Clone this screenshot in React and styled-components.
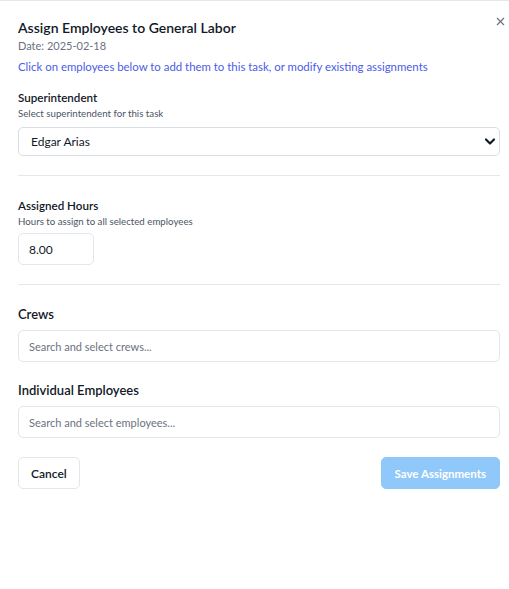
import React from 'react';
import styled, { createGlobalStyle } from 'styled-components';

const GlobalStyle = createGlobalStyle`
  body {
    margin: 0;
    background: #fff;
    font-family: Lato, "Noto Sans", sans-serif;
    color: #111827;
  }
`;

const Panel = styled.div`
  position: relative;
  box-sizing: border-box;
  min-height: 589px;
  border-top: 1px solid #e3e6ec;
  padding: 17px 9px 0 18px;
  background: #fff;
`;

const Close = styled.button`
  position: absolute;
  top: 12px;
  right: 1px;
  width: 16px;
  height: 16px;
  padding: 0;
  border: 0;
  background: none;
  color: #6b7280;
  display: flex;
  align-items: center;
  justify-content: center;
`;

const Title = styled.h2`
  margin: 0;
  font-size: 14px;
  line-height: 20px;
  font-weight: 600;
  color: #111827;
`;

const DateLine = styled.div`
  font-size: 11px;
  line-height: 16px;
  color: #6b7280;
`;

const Hint = styled.div`
  margin-top: 5px;
  font-size: 11.4px;
  line-height: 16px;
  color: #4a5ce8;
`;

const Section = styled.section`
  padding: ${p => p.$top || 20}px 0 19px;
  border-bottom: ${p => (p.$divider ? '1px solid #e3e6ec' : '0')};
`;

const Label = styled.div`
  font-size: ${p => (p.$big ? 13 : 11.6)}px;
  line-height: ${p => (p.$big ? 18 : 16)}px;
  font-weight: 600;
  color: #111827;
`;

const Sub = styled.div`
  font-size: 9.7px;
  line-height: 14px;
  color: #4b5563;
`;

const SelectWrap = styled.div`
  position: relative;
  margin-top: 7px;
`;

const Select = styled.select`
  appearance: none;
  box-sizing: border-box;
  width: 100%;
  height: 29px;
  padding: 0 30px 0 12px;
  border: 1px solid #d9dde4;
  border-radius: 5px;
  background: #fff;
  font: inherit;
  font-size: 12px;
  color: #111827;
`;

const Chevron = styled.svg`
  position: absolute;
  right: 4px;
  top: 10px;
  pointer-events: none;
`;

const Input = styled.input`
  box-sizing: border-box;
  display: block;
  width: ${p => p.$width || '100%'};
  height: 32px;
  margin-top: ${p => p.$gap || 7}px;
  padding: 0 10px;
  border: 1px solid #e3e6ec;
  border-radius: 5px;
  font: inherit;
  font-size: ${p => (p.$value ? 12 : 11)}px;
  color: #111827;
  &::placeholder {
    color: #6b7280;
  }
`;

const Actions = styled.div`
  display: flex;
  justify-content: space-between;
  margin-top: 19px;
`;

const Button = styled.button`
  height: 32px;
  padding: 0 ${p => (p.$primary ? 13 : 12)}px;
  border-radius: 5px;
  border: 1px solid ${p => (p.$primary ? '#90c9f9' : '#e3e6ec')};
  background: ${p => (p.$primary ? '#90c9f9' : '#fff')};
  color: ${p => (p.$primary ? '#fff' : '#111827')};
  font: inherit;
  font-size: ${p => (p.$primary ? 11.5 : 12)}px;
  font-weight: ${p => (p.$primary ? 700 : 600)};
`;

export default function App() {
  return (
    <>
      <GlobalStyle />
      <Panel>
        <Close aria-label="Close">
          <svg width="9" height="9" viewBox="0 0 9 9" fill="none" stroke="currentColor" strokeWidth="1.2">
            <path d="M1 1l7 7M8 1L1 8" />
          </svg>
        </Close>
        <Title>Assign Employees to General Labor</Title>
        <DateLine>Date: 2025-02-18</DateLine>
        <Hint>Click on employees below to add them to this task, or modify existing assignments</Hint>

        <Section $top={15} $divider>
          <Label>Superintendent</Label>
          <Sub>Select superintendent for this task</Sub>
          <SelectWrap>
            <Select defaultValue="edgar">
              <option value="edgar">Edgar Arias</option>
            </Select>
            <Chevron width="12" height="9" viewBox="0 0 12 9" fill="none" stroke="#111827" strokeWidth="2.2" strokeLinecap="round" strokeLinejoin="round">
              <path d="M2 2.5l4 4 4-4" />
            </Chevron>
          </SelectWrap>
        </Section>

        <Section $top={22} $divider>
          <Label>Assigned Hours</Label>
          <Sub>Hours to assign to all selected employees</Sub>
          <Input $width="76px" $gap={5} $value defaultValue="8.00" />
        </Section>

        <Section $top={20}>
          <Label $big>Crews</Label>
          <Input placeholder="Search and select crews..." />
        </Section>

        <div>
          <Label $big>Individual Employees</Label>
          <Input placeholder="Search and select employees..." />
        </div>

        <Actions>
          <Button>Cancel</Button>
          <Button $primary>Save Assignments</Button>
        </Actions>
      </Panel>
    </>
  );
}
